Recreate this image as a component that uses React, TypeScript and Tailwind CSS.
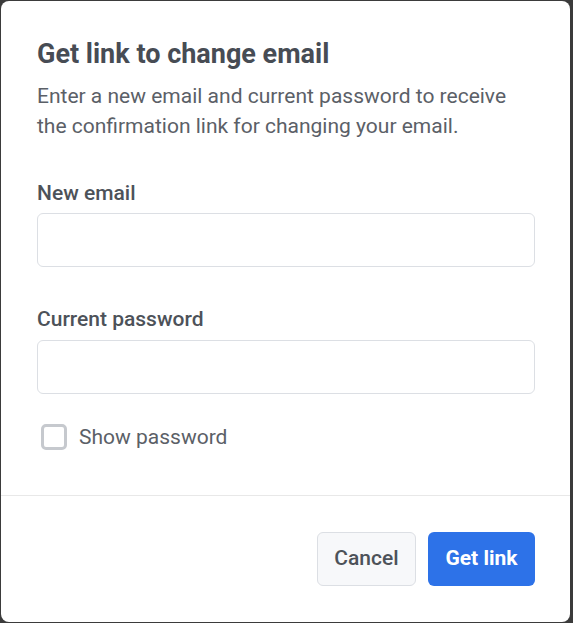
import { useState } from 'react'

export default function App() {
  const [show, setShow] = useState(false)

  return (
    <div className="h-screen w-full bg-[#3b3b3b] pt-px pr-[3px] pb-px pl-px" style={{ fontFamily: 'Roboto, "Noto Sans", sans-serif' }}>
      <div className="flex h-full flex-col rounded-lg bg-white">
        {/* Body */}
        <div className="pt-[37px] pr-[35px] pl-9">
          <h2 className="text-[27px] font-bold leading-[32px] text-[#474c54]">Get link to change email</h2>
          <p className="mt-[11px] text-[21px] leading-[30px] text-[#5b6067]">
            Enter a new email and current password to receive the confirmation link for changing your email.
          </p>

          <label className="mt-[38px] block text-[21px] font-medium leading-[28px] text-[#4d5259]">New email</label>
          <input
            type="email"
            className="mt-[6px] block h-[54px] w-full rounded-md border border-[#dcdfe4] px-4 text-[20px] outline-none"
          />

          <label className="mt-[38px] block text-[21px] font-medium leading-[28px] text-[#4d5259]">Current password</label>
          <input
            type={show ? 'text' : 'password'}
            className="mt-[7px] block h-[54px] w-full rounded-md border border-[#dcdfe4] px-4 text-[20px] outline-none"
          />

          <label className="mt-[29px] flex items-center gap-3 pl-1">
            <span
              onClick={() => setShow(!show)}
              className="block h-[26px] w-[26px] rounded-[5px] border-[3px] border-[#c6c9ce] bg-white"
            />
            <span className="text-[21px] leading-[28px] text-[#5b6067]">Show password</span>
          </label>
        </div>

        <div className="mt-auto border-t border-[#e8e8e8] pt-9 pr-[35px] pb-9 pl-9">
          <div className="flex justify-end gap-3">
            <button className="h-[54px] w-[99px] rounded-md border border-[#dcdfe4] bg-[#f7f8fa] text-[21px] font-medium text-[#4d5259]">
              Cancel
            </button>
            <button className="h-[54px] w-[107px] rounded-md bg-[#2d72e8] text-[21px] font-bold text-white">
              Get link
            </button>
          </div>
        </div>
      </div>
    </div>
  )
}
